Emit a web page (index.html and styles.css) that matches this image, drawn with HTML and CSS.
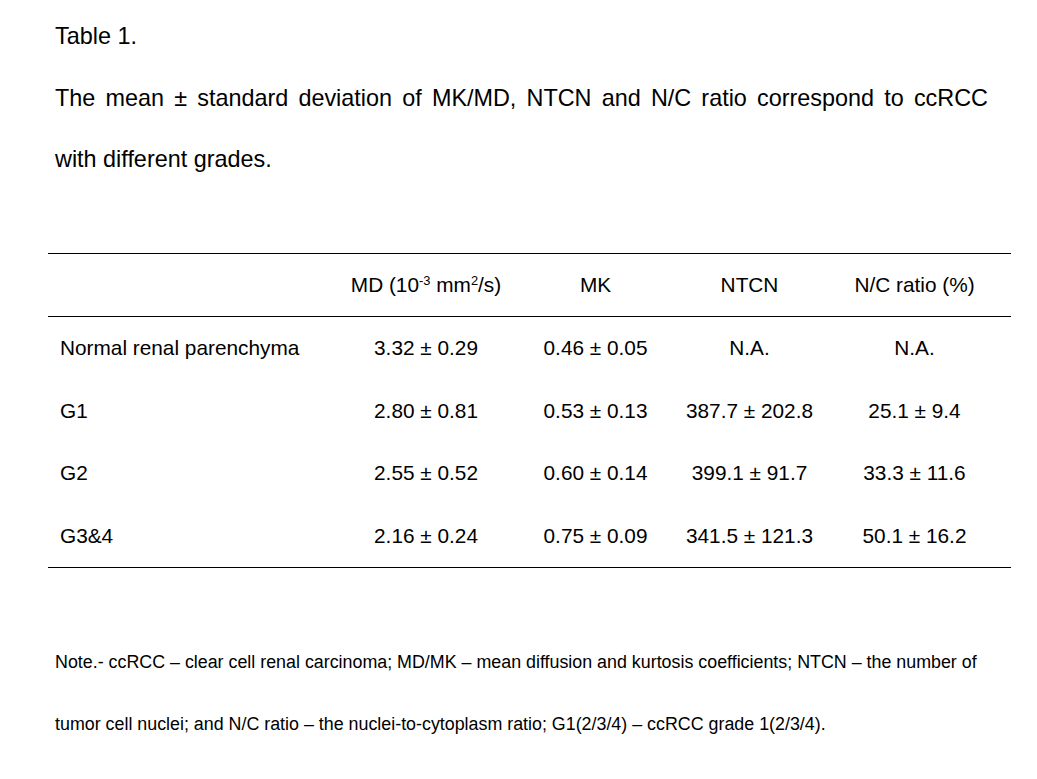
FILE: index.html
```html
<!DOCTYPE html>
<html lang="en">
<head>
<meta charset="utf-8">
<title>Table 1</title>
<link rel="stylesheet" href="styles.css">
</head>
<body>
<main class="page">
  <header class="caption">
    <p class="caption-line">Table 1.</p>
    <p class="caption-line caption-justify">The mean ± standard deviation of MK/MD, NTCN and N/C ratio correspond to ccRCC</p>
    <p class="caption-line">with different grades.</p>
  </header>

  <table class="data">
    <colgroup>
      <col class="c-label">
      <col class="c-md">
      <col class="c-mk">
      <col class="c-ntcn">
      <col class="c-nc">
    </colgroup>
    <thead>
      <tr>
        <th></th>
        <th>MD (10<sup>-3</sup> mm<sup>2</sup>/s)</th>
        <th>MK</th>
        <th>NTCN</th>
        <th>N/C ratio (%)</th>
      </tr>
    </thead>
    <tbody>
      <tr>
        <td class="label">Normal renal parenchyma</td>
        <td>3.32 ± 0.29</td>
        <td>0.46 ± 0.05</td>
        <td>N.A.</td>
        <td>N.A.</td>
      </tr>
      <tr>
        <td class="label">G1</td>
        <td>2.80 ± 0.81</td>
        <td>0.53 ± 0.13</td>
        <td>387.7 ± 202.8</td>
        <td>25.1 ± 9.4</td>
      </tr>
      <tr>
        <td class="label">G2</td>
        <td>2.55 ± 0.52</td>
        <td>0.60 ± 0.14</td>
        <td>399.1 ± 91.7</td>
        <td>33.3 ± 11.6</td>
      </tr>
      <tr>
        <td class="label">G3&amp;4</td>
        <td>2.16 ± 0.24</td>
        <td>0.75 ± 0.09</td>
        <td>341.5 ± 121.3</td>
        <td>50.1 ± 16.2</td>
      </tr>
    </tbody>
  </table>

  <p class="note">Note.- ccRCC – clear cell renal carcinoma; MD/MK – mean diffusion and kurtosis coefficients; NTCN – the number of tumor cell nuclei; and N/C ratio – the nuclei-to-cytoplasm ratio; G1(2/3/4) – ccRCC grade 1(2/3/4).</p>
</main>
</body>
</html>
```

FILE: styles.css
```css
html, body {
  margin: 0;
  padding: 0;
  background: #ffffff;
}

body {
  font-family: "Liberation Sans", Arial, sans-serif;
  color: #000000;
}

.page {
  width: 1037px;
  min-height: 779px;
  padding: 6px 0 0 48px;
  box-sizing: border-box;
}

.caption {
  padding-left: 7px;
  width: 933px;
}

.caption-line {
  margin: 0;
  font-size: 23.4px;
  line-height: 61.5px;
  white-space: nowrap;
}

.caption-justify {
  text-align: justify;
  text-align-last: justify;
}

.data {
  margin-top: 62.5px;
  width: 963px;
  border-collapse: collapse;
  table-layout: fixed;
  font-size: 20.8px;
  border-top: 1px solid #000000;
  border-bottom: 1px solid #000000;
}

.c-label { width: 294px; }
.c-md { width: 168px; }
.c-mk { width: 171px; }
.c-ntcn { width: 137px; }
.c-nc { width: 193px; }

.data th,
.data td {
  padding: 0;
  text-align: center;
  font-weight: normal;
  white-space: nowrap;
}

.data thead th {
  height: 62px;
  line-height: 62px;
  border-bottom: 1px solid #000000;
}

.data tbody td {
  height: 62.5px;
  line-height: 62.5px;
}

.data td.label {
  text-align: left;
  padding-left: 12px;
}

.data sup {
  font-size: 0.62em;
  line-height: 0;
  vertical-align: 0.55em;
}

.note {
  margin: 63px 0 0 7px;
  width: 940px;
  font-size: 17.85px;
  line-height: 62px;
}
```
